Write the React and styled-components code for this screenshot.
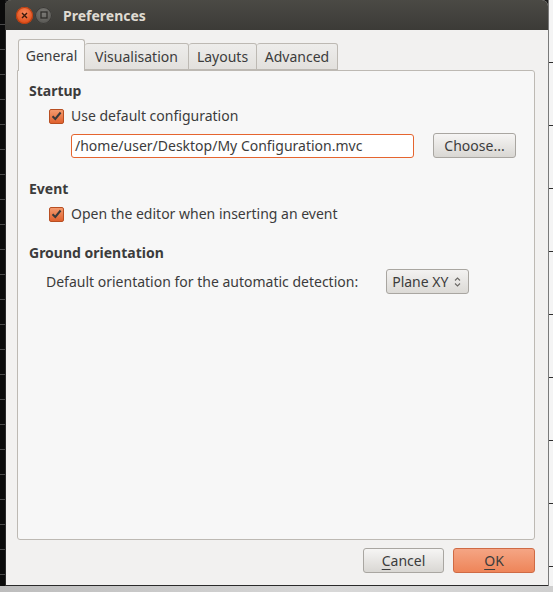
import React from "react";
import styled, { createGlobalStyle } from "styled-components";

const GlobalStyle = createGlobalStyle`
  body {
    margin: 0;
    background: #1a1a1a;
    font-family: "Noto Sans", "DejaVu Sans", sans-serif;
  }
`;

const Screen = styled.div`
  width: 553px;
  height: 592px;
  display: grid;
  grid-template-columns: 5px 543px 5px;
  grid-template-rows: 586px 6px;
  overflow: hidden;
`;

const BackdropLeft = styled.div`
  background: repeating-linear-gradient(
    to bottom,
    #0b0b0b 0px,
    #0b0b0b 24px,
    #4a4a4a 24px,
    #4a4a4a 25px
  );
`;

const BackdropRight = styled.div`
  background: repeating-linear-gradient(
    to bottom,
    #f4f4f4 0px,
    #f4f4f4 62px,
    #2e2e2e 62px,
    #2e2e2e 63px
  );
  border-left: 1px solid #7a7a7a;
`;

const BackdropBottom = styled.div`
  grid-column: 1 / 4;
  background: linear-gradient(to right, #bdbdbd, #d8d8d8 60%, #cfcfcf);
`;

const Window = styled.div`
  display: flex;
  flex-direction: column;
  background: #f2f1f0;
  border-radius: 6px 6px 0 0;
  overflow: hidden;
  box-shadow: inset 1px 0 0 #2a2a2a, inset 0 -1px 0 #2a2a2a;
`;

const TitleBar = styled.div`
  height: 30px;
  flex: none;
  display: flex;
  align-items: center;
  padding-left: 11px;
  gap: 2px;
  background: linear-gradient(to bottom, #4b4a45, #3c3b37);
`;

const WinButton = styled.span`
  width: 17px;
  height: 17px;
  border-radius: 50%;
  display: flex;
  align-items: center;
  justify-content: center;
  background: ${(p) =>
    p.$close
      ? "radial-gradient(circle at 50% 35%, #f7875a, #e0501c 70%)"
      : "radial-gradient(circle at 50% 35%, #7b7a76, #5a5955 70%)"};
  box-shadow: inset 0 0 0 1px ${(p) => (p.$close ? "#b83e10" : "#3a3936")};
`;

const Title = styled.span`
  margin-left: 9px;
  font-size: 14px;
  font-weight: 700;
  color: #dfdbd2;
`;

const Body = styled.div`
  flex: 1;
  display: flex;
  flex-direction: column;
  padding: 10px 12px 13px 12px;
`;

const TabRow = styled.div`
  display: flex;
  align-items: flex-end;
  height: 30px;
  padding-left: 1px;
`;

const Tab = styled.div`
  width: ${(p) => p.$w}px;
  box-sizing: border-box;
  height: ${(p) => (p.$active ? "32px" : "27px")};
  margin-bottom: ${(p) => (p.$active ? "-1px" : "0")};
  display: flex;
  align-items: center;
  justify-content: center;
  font-size: 14px;
  color: #3c3c3c;
  border: 1px solid #bdb9b3;
  border-bottom: ${(p) => (p.$active ? "none" : "1px solid #bdb9b3")};
  border-left: ${(p) => (p.$first ? "1px solid #bdb9b3" : "none")};
  border-radius: 3px 3px 0 0;
  background: ${(p) =>
    p.$active ? "#f7f7f7" : "linear-gradient(to bottom, #eeedeb, #e2e0dd)"};
  position: relative;
  z-index: ${(p) => (p.$active ? 2 : 1)};
`;

const Panel = styled.div`
  flex: 1;
  background: #f7f7f7;
  border: 1px solid #bdb9b3;
  border-radius: 0 3px 3px 3px;
  padding: 11px 11px;
  display: flex;
  flex-direction: column;
  margin-right: 1px;
`;

const Section = styled.div`
  display: flex;
  flex-direction: column;
  margin-bottom: ${(p) => p.$gap || 0}px;
`;

const Heading = styled.div`
  font-size: 14px;
  font-weight: 700;
  color: #3c3c3c;
  line-height: 18px;
`;

const CheckRow = styled.label`
  display: flex;
  align-items: center;
  gap: 7px;
  margin-top: 7px;
  margin-left: 20px;
  font-size: 14px;
  color: #3c3c3c;
  line-height: 18px;
`;

const Box = styled.span`
  width: 15px;
  height: 15px;
  box-sizing: border-box;
  border-radius: 2px;
  border: 1px solid #b84f22;
  background: linear-gradient(to bottom, #f39a6e, #e0612e);
  display: flex;
  align-items: center;
  justify-content: center;
`;

const EntryRow = styled.div`
  display: flex;
  align-items: center;
  margin-top: 8px;
  margin-left: 42px;
`;

const Entry = styled.div`
  width: 343px;
  height: 24px;
  box-sizing: border-box;
  border: 1px solid #e5652f;
  border-radius: 3px;
  background: #fff;
  display: flex;
  align-items: center;
  padding-left: 3px;
  font-size: 14px;
  color: #3c3c3c;
`;

const Button = styled.div`
  width: ${(p) => p.$w}px;
  height: 25px;
  margin-left: ${(p) => p.$ml || 0}px;
  box-sizing: border-box;
  border-radius: 3px;
  border: 1px solid ${(p) => (p.$primary ? "#cf6a44" : "#a9a6a1")};
  background: ${(p) =>
    p.$primary
      ? "linear-gradient(to bottom, #f5a584, #ee8559)"
      : "linear-gradient(to bottom, #f6f5f4, #d9d7d3)"};
  display: flex;
  align-items: center;
  justify-content: center;
  font-size: 14px;
  color: #3c3c3c;
`;

const Mnemonic = styled.span`
  text-decoration: underline;
  text-underline-offset: 3px;
`;

const OrientRow = styled.div`
  display: flex;
  align-items: center;
  margin-top: 7px;
  margin-left: 17px;
  font-size: 14px;
  color: #3c3c3c;
`;

const Combo = styled.div`
  margin-left: 28px;
  width: 83px;
  height: 25px;
  box-sizing: border-box;
  border: 1px solid #a9a6a1;
  border-radius: 3px;
  background: linear-gradient(to bottom, #f3f2f1, #dcdad6);
  display: flex;
  align-items: center;
  justify-content: space-between;
  padding: 0 7px 0 5px;
  font-size: 14px;
  color: #3c3c3c;
`;

const Footer = styled.div`
  display: flex;
  justify-content: flex-end;
  gap: 9px;
  margin-top: 8px;
  padding-right: 1px;
`;

const Check = () => (
  <svg width="11" height="10" viewBox="0 0 11 10">
    <path d="M1.5 5.2 L4.3 8 L9.6 1.5" fill="none" stroke="#3a3a3a" strokeWidth="2" />
  </svg>
);

const Cross = () => (
  <svg width="7" height="7" viewBox="0 0 7 7">
    <path d="M1 1 L6 6 M6 1 L1 6" stroke="#3a1a0c" strokeWidth="1.4" />
  </svg>
);

const Square = () => (
  <svg width="8" height="8" viewBox="0 0 8 8">
    <rect x="1" y="1" width="6" height="6" fill="none" stroke="#2e2d2a" strokeWidth="1.3" />
  </svg>
);

const Arrows = () => (
  <svg width="7" height="12" viewBox="0 0 7 12">
    <path d="M1 4.5 L3.5 2 L6 4.5" fill="none" stroke="#6a6864" strokeWidth="1.1" />
    <path d="M1 7.5 L3.5 10 L6 7.5" fill="none" stroke="#6a6864" strokeWidth="1.1" />
  </svg>
);

export default function App() {
  return (
    <>
      <GlobalStyle />
      <Screen>
        <BackdropLeft />
        <Window>
          <TitleBar>
            <WinButton $close>
              <Cross />
            </WinButton>
            <WinButton>
              <Square />
            </WinButton>
            <Title>Preferences</Title>
          </TitleBar>
          <Body>
            <TabRow>
              <Tab $active $first $w={67}>General</Tab>
              <Tab $w={104}>Visualisation</Tab>
              <Tab $w={68}>Layouts</Tab>
              <Tab $w={81}>Advanced</Tab>
            </TabRow>
            <Panel>
              <Section $gap={22}>
                <Heading>Startup</Heading>
                <CheckRow>
                  <Box>
                    <Check />
                  </Box>
                  Use default configuration
                </CheckRow>
                <EntryRow>
                  <Entry>/home/user/Desktop/My Configuration.mvc</Entry>
                  <Button $w={83} $ml={19}>Choose...</Button>
                </EntryRow>
              </Section>
              <Section $gap={21}>
                <Heading>Event</Heading>
                <CheckRow>
                  <Box>
                    <Check />
                  </Box>
                  Open the editor when inserting an event
                </CheckRow>
              </Section>
              <Section>
                <Heading>Ground orientation</Heading>
                <OrientRow>
                  Default orientation for the automatic detection:
                  <Combo>
                    Plane XY
                    <Arrows />
                  </Combo>
                </OrientRow>
              </Section>
            </Panel>
            <Footer>
              <Button $w={81}>
                <Mnemonic>C</Mnemonic>ancel
              </Button>
              <Button $w={82} $primary>
                <Mnemonic>O</Mnemonic>K
              </Button>
            </Footer>
          </Body>
        </Window>
        <BackdropRight />
        <BackdropBottom />
      </Screen>
    </>
  );
}
